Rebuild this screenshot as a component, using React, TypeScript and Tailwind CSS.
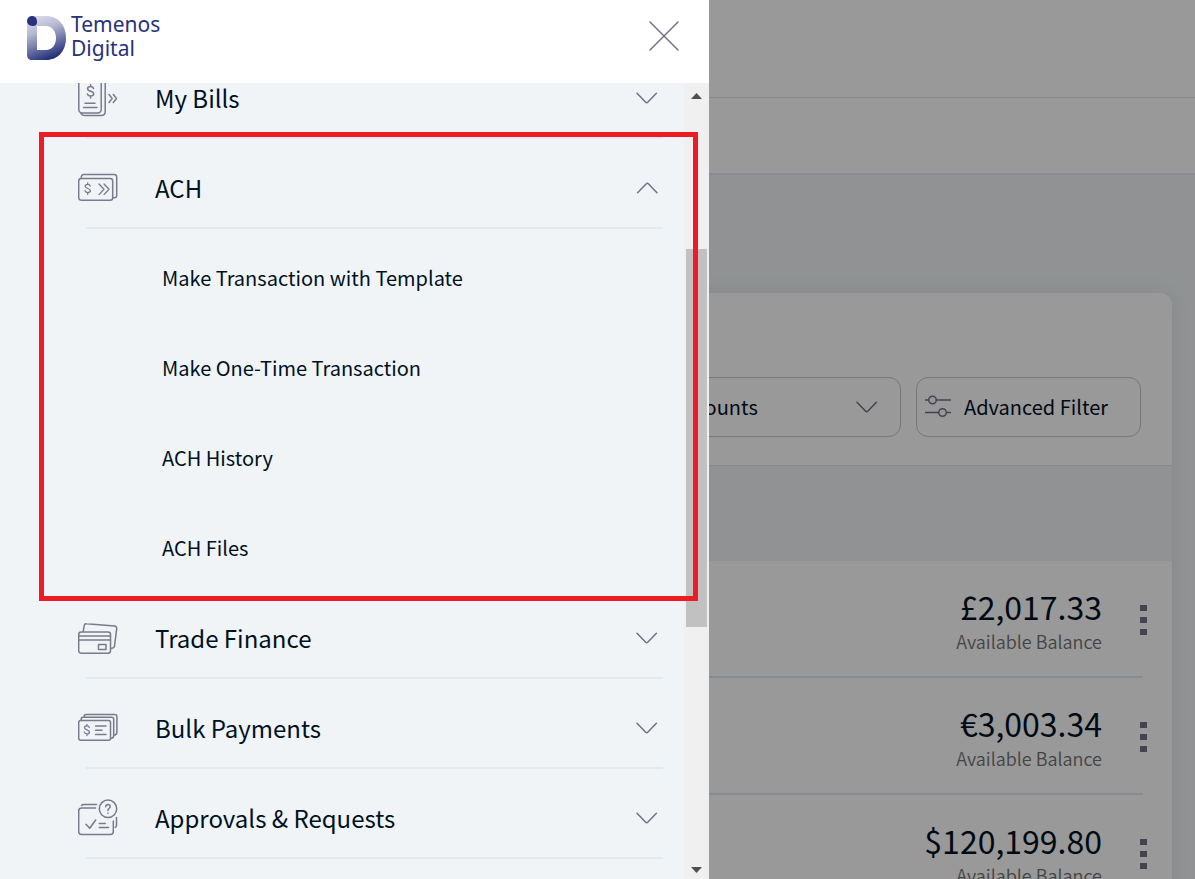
import type { ReactNode } from "react";

type MenuItem = {
  label: string;
  icon: ReactNode;
  children?: string[];
};

function Icon({ children }: { children: ReactNode }) {
  return (
    <svg
      width="40"
      height="40"
      viewBox="0 0 40 40"
      fill="none"
      stroke="currentColor"
      strokeWidth="1.5"
      strokeLinecap="round"
      strokeLinejoin="round"
      className="shrink-0 text-[#7b798c]"
      aria-hidden="true"
    >
      {children}
    </svg>
  );
}

function BillsIcon() {
  return (
    <Icon>
      <rect x="0.8" y="-4" width="22.4" height="39" rx="3.5" />
      <path d="M3 35.600c.9 1.300 1.900 1.900 3.500 1.900h16.700c2.400 0 4-1.600 4-4V0" />
      <path d="M15.500 10.500c-.4-1.400-1.500-2.100-3-2.100-1.700 0-2.900.8-2.900 2.300 0 3.400 6.100 1.800 6.100 5.100 0 1.500-1.300 2.300-3.100 2.300-1.700 0-2.900-.8-3.200-2.200M12.600 6.500v1.800M12.600 18.300v1.800M7 25.200h10M5.500 29.500h13.500" />
      <path d="M31 16.500l3.200 4-3.200 4M35.300 16.500l3.200 4-3.200 4" />
    </Icon>
  );
}

function AchIcon() {
  return (
    <Icon>
      <rect x="0.7" y="10.5" width="34" height="21.800" rx="2.500" />
      <path d="M3.300 10.300V9c0-1.500.9-2.400 2.400-2.400h30.500c1.600 0 2.500.9 2.500 2.500v18.300c0 1.500-1 2.300-2.500 2.300H35" />
      <path
        strokeWidth="1.300"
        d="M12.200 18c-.3-1.100-1.200-1.700-2.500-1.700-1.500 0-2.500.7-2.500 1.900 0 2.900 5.200 1.700 5.200 4.400 0 1.300-1.100 2-2.600 2-1.600 0-2.500-.7-2.700-1.900M9.700 14.800v1.500M9.700 24.600v1.700"
      />
      <path strokeWidth="1.300" d="M21 16l5 5.300-5 5.300M26 16l5 5.300-5 5.300" />
    </Icon>
  );
}

function TradeIcon() {
  return (
    <Icon>
      <rect x="0.700" y="14" width="31.800" height="21.300" rx="2.500" />
      <path d="M1 18h31.500M1 22h31.500" />
      <rect x="20.500" y="26.500" width="7.500" height="5" />
      <path d="M5.200 13.500l1-6c.2-1.300 1.100-2 2.400-1.800l27.900 2.400c1.500.2 2.400 1.100 2.200 2.500L36.500 28c-.2 1.600-1.300 2.300-3.500 2.400" />
    </Icon>
  );
}

function BulkIcon() {
  return (
    <Icon>
      <rect x="0.700" y="12.500" width="31.800" height="19.800" rx="2" />
      <path d="M3.200 12V11c0-1.200.7-1.700 1.900-1.700h28.500c1.400 0 2.100.7 2.100 2v16.500c0 1.500-1 2.500-2.800 2.700" />
      <path d="M6.200 9V8.200c0-1.200.7-1.700 1.900-1.700h28.700c1.400 0 2.100.7 2.100 2v15.800c0 1.500-1 2.700-2.800 3" />
      <path
        strokeWidth="1.300"
        d="M11.300 19.500c-.3-1-1.200-1.600-2.400-1.600-1.500 0-2.400.7-2.400 1.800 0 2.600 5 1.600 5 4.200 0 1.200-1 1.900-2.500 1.900s-2.500-.7-2.700-1.800M8.900 16.400v1.500M8.900 25.800v1.700"
      />
      <path d="M17.500 18h10.500M17.500 22.200h6.500M17.500 26.500h10.500" />
    </Icon>
  );
}

function ApprovalsIcon() {
  return (
    <Icon>
      <path d="M17.500 9.900H3.700c-2 0-3 1-3 3v20.600c0 2 1 3 3 3h28.600c2 0 3-1 3-3V23" />
      <path d="M3.500 7.500C4 6.800 4.800 6.500 6 6.500h12.500M38.500 19.500v8c0 .9-.5 1.500-1.200 1.900" />
      <circle cx="30" cy="10.800" r="8.700" />
      <path d="M27.700 8.700c0-1.300.9-2.100 2.200-2.100s2.300.8 2.300 2c0 1.800-2.300 2-2.300 4M29.900 15.100v.2M8 26.300l3.700 4 6-8.300M21.300 25.500h6M21.300 29.500h9.200" />
    </Icon>
  );
}

function Chevron({ up = false }: { up?: boolean }) {
  return (
    <svg
      width="22"
      height="12"
      viewBox="0 0 22 12"
      fill="none"
      stroke="#727086"
      strokeWidth="1.500"
      strokeLinecap="round"
      strokeLinejoin="round"
      className={up ? "rotate-180" : ""}
      aria-hidden="true"
    >
      <path d="M1 1.300l8.700 9c.6.700 1.400.7 2 0l8.700-9" />
    </svg>
  );
}

function Logo() {
  return (
    <a
      href="#"
      className="flex items-center gap-[5px] pt-1 font-['Noto_Sans',sans-serif] text-[21px] leading-6 text-[#28327a]"
    >
      <svg width="39" height="44" viewBox="0 0 39 44" aria-hidden="true">
        <defs>
          <linearGradient
            id="letter"
            gradientUnits="userSpaceOnUse"
            x1="9"
            y1="3"
            x2="24"
            y2="42"
          >
            <stop offset="0" stopColor="#d3d6e5" />
            <stop offset="0.3" stopColor="#b4b8d1" />
            <stop offset="0.65" stopColor="#6d75a5" />
            <stop offset="1" stopColor="#263177" />
          </linearGradient>
        </defs>
        <path
          fillRule="evenodd"
          d="M5 0h14c12 0 20 9 20 22s-8 22-20 22H5c-3 0-5-2-5-5V5zM10 10v24h9c6 0 10-5 10-12s-4-12-10-12z"
          fill="url(#letter)"
        />
        <path d="M5 0a5 5 0 0 1 5 5v1a4 4 0 0 1-4 4H5A5 5 0 0 1 5 0z" fill="#28327a" />
      </svg>
      <div className="pb-1">
        <p>Temenos</p>
        <p>Digital</p>
      </div>
    </a>
  );
}

const menu: MenuItem[] = [
  { label: "My Bills", icon: <BillsIcon /> },
  {
    label: "ACH",
    icon: <AchIcon />,
    children: [
      "Make Transaction with Template",
      "Make One-Time Transaction",
      "ACH History",
      "ACH Files",
    ],
  },
  { label: "Trade Finance", icon: <TradeIcon /> },
  { label: "Bulk Payments", icon: <BulkIcon /> },
  { label: "Approvals & Requests", icon: <ApprovalsIcon /> },
];

const balances = ["£2,017.33", "€3,003.34", "$120,199.80"];

function MenuRow({ item }: { item: MenuItem }) {
  return (
    <li className="relative">
      <div className="flex h-[90px] flex-col">
        <button
          type="button"
          aria-expanded={!!item.children}
          className="flex flex-1 items-center gap-[37px] pt-2.5 pr-[26px] pl-[78px] text-left text-2xl"
        >
          {item.icon}
          <span className="flex-1">{item.label}</span>
          <Chevron up={!!item.children} />
        </button>
        <div className="mr-[21px] ml-[86px] h-0.5 shrink-0 bg-[#e1e9f1]" />
      </div>
      {item.children && (
        <>
          <ul>
            {item.children.map((child) => (
              <li key={child}>
                <a
                  href="#"
                  className="flex h-[90px] items-center pt-2 pl-[162px] text-xl"
                >
                  {child}
                </a>
              </li>
            ))}
          </ul>
          <div className="pointer-events-none absolute -top-[7px] -right-[14px] -bottom-3 left-[39px] z-10 border-5 border-[#ed1c24]" />
        </>
      )}
    </li>
  );
}

function Scrollbar() {
  return (
    <div className="flex w-[25px] shrink-0 flex-col items-center bg-[#f0f0f0] pt-2.5 pb-1.5">
      <svg width="11" height="6" viewBox="0 0 11 6" aria-hidden="true">
        <path d="M0 6L5.500 0 11 6z" fill="#505050" />
      </svg>
      <div className="flex w-full flex-1 flex-col px-0.5">
        <div className="flex-[150]" />
        <div className="flex-[378] bg-[#c1c1c1]" />
        <div className="flex-[240]" />
      </div>
      <svg width="11" height="6" viewBox="0 0 11 6" aria-hidden="true">
        <path d="M0 0h11L5.500 6z" fill="#505050" />
      </svg>
    </div>
  );
}

function Drawer() {
  return (
    <nav className="fixed inset-y-0 left-0 flex w-[59.3%] flex-col bg-white">
      <div className="flex h-[83px] shrink-0 items-center justify-between pr-[30px] pb-[11px] pl-[27px]">
        <Logo />
        <button type="button" aria-label="Close">
          <svg width="30" height="30" viewBox="0 0 30 30" aria-hidden="true">
            <path
              d="M1 1l28 28M29 1L1 29"
              stroke="#727086"
              strokeWidth="1.500"
              strokeLinecap="round"
            />
          </svg>
        </button>
      </div>
      <div className="flex min-h-0 flex-1 overflow-hidden bg-[#f0f4f7]">
        <ul className="-mt-[34px] flex-1">
          {menu.map((item) => (
            <MenuRow key={item.label} item={item} />
          ))}
        </ul>
        <Scrollbar />
      </div>
    </nav>
  );
}

function Accounts() {
  return (
    <div className="flex h-screen flex-col overflow-hidden bg-[#f0f4f7]">
      <header className="shrink-0 bg-white">
        <div className="h-[98px] border-b border-[#e3e3e3]" />
        <div className="h-[77px] border-b-2 border-[#e1e9f1]" />
      </header>
      <main className="mt-[118px] mr-[23px] ml-[60px] flex-1 rounded-t-xl bg-white shadow-[0_0_20px_rgba(0,0,0,0.08)]">
        <div className="flex justify-end gap-[15px] pt-[84px] pr-[31px] pb-7">
          <div className="flex h-[60px] w-[290px] items-center rounded-xl border border-[#c6c6c6] pr-[22px]">
            <select
              aria-label="Accounts"
              className="min-w-0 flex-1 appearance-none bg-transparent pl-[33px] text-xl"
            >
              <option>All Accounts</option>
            </select>
            <Chevron />
          </div>
          <button
            type="button"
            className="flex h-[60px] w-[225px] items-center gap-[13px] rounded-xl border border-[#c6c6c6] pl-2 text-xl"
          >
            <svg
              width="26"
              height="24"
              viewBox="0 0 26 24"
              fill="none"
              stroke="#727086"
              strokeWidth="1.500"
              aria-hidden="true"
            >
              <path d="M0 5h3.500M11.500 5H26M0 17.500h13.500M21.500 17.500H26" />
              <circle cx="7.500" cy="5" r="3.800" />
              <circle cx="17.500" cy="17.500" r="3.800" />
            </svg>
            Advanced Filter
          </button>
        </div>
        <div className="h-24 border-t border-[#e3e6ea] bg-[#f0f3f6]" />
        <ul>
          {balances.map((amount) => (
            <li
              key={amount}
              className="mr-[29px] flex h-[117px] justify-end border-b-2 border-[#e1e9f1]"
            >
              <div className="pt-[22px] text-right">
                <p className="text-[32px] leading-[46px]">{amount}</p>
                <p className="text-lg leading-6 font-[350] text-[#727272]">
                  Available Balance
                </p>
              </div>
              <button
                type="button"
                aria-label="More options"
                className="-mr-1 ml-[38px] flex flex-col gap-1.5 self-start pt-11"
              >
                <span className="h-1.5 w-[7px] bg-[#727086]" />
                <span className="h-1.5 w-[7px] bg-[#727086]" />
                <span className="h-1.5 w-[7px] bg-[#727086]" />
              </button>
            </li>
          ))}
        </ul>
      </main>
    </div>
  );
}

export default function App() {
  return (
    <div className="font-['Noto_Sans_CJK_SC','Noto_Sans',sans-serif] text-[#00111f]">
      <Accounts />
      <div className="fixed inset-0 bg-black/40" />
      <Drawer />
    </div>
  );
}
